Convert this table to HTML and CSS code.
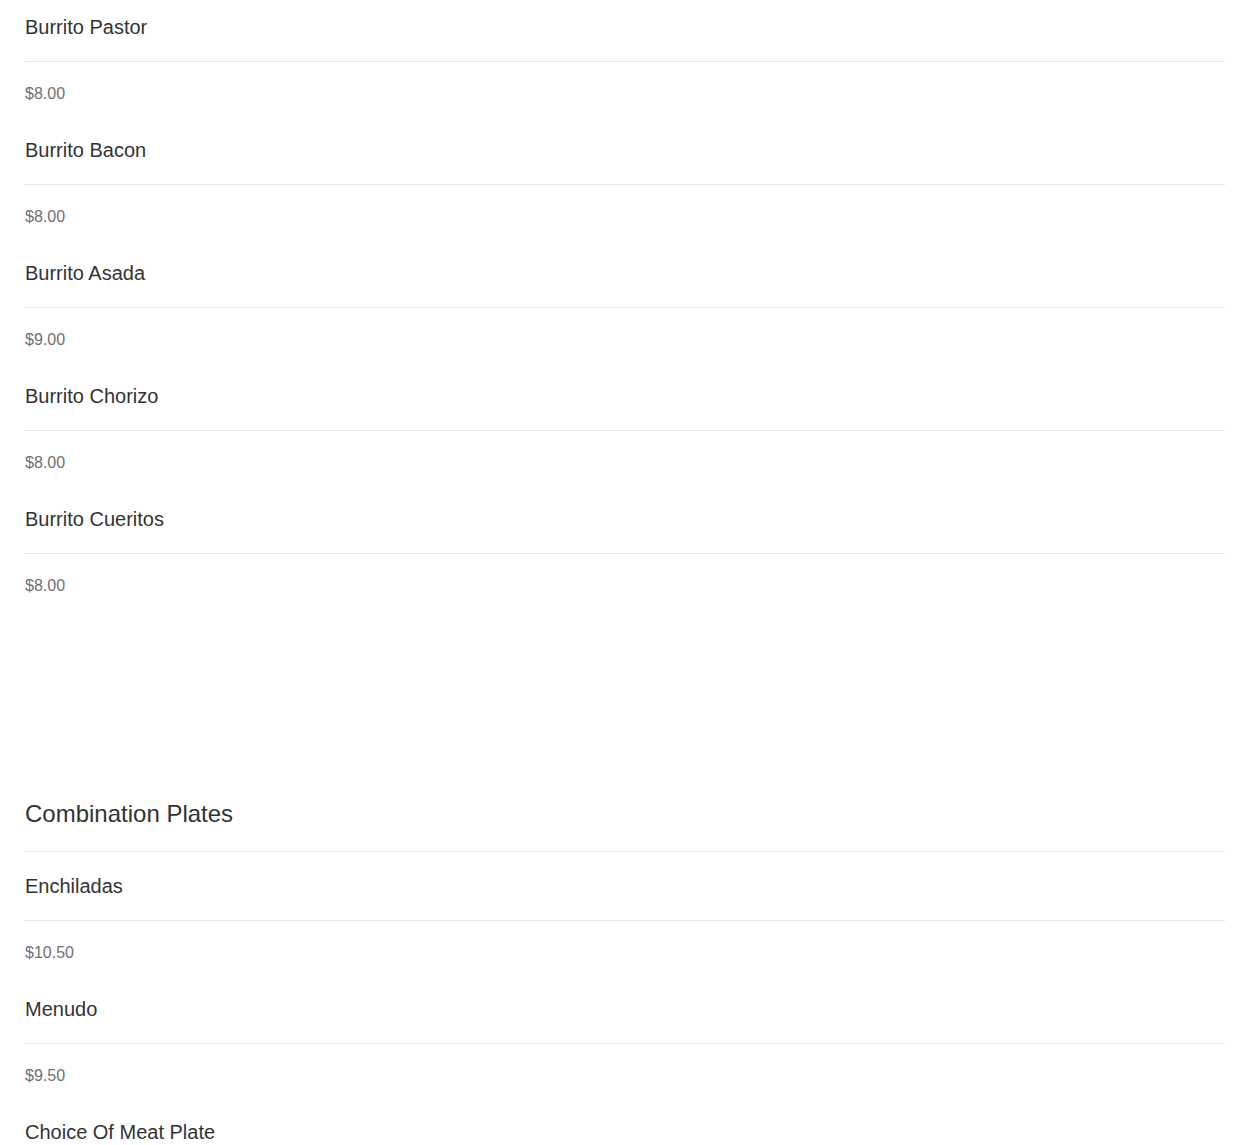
FILE: index.html
```html
<!DOCTYPE html>
<html>
<head>
<meta charset="utf-8">
<link rel="stylesheet" href="styles.css">
</head>
<body>
<div class="menu">
  <section class="section">
    <div class="item"><div class="name">Burrito Pastor</div><div class="price">$8.00</div></div>
    <div class="item"><div class="name">Burrito Bacon</div><div class="price">$8.00</div></div>
    <div class="item"><div class="name">Burrito Asada</div><div class="price">$9.00</div></div>
    <div class="item"><div class="name">Burrito Chorizo</div><div class="price">$8.00</div></div>
    <div class="item"><div class="name">Burrito Cueritos</div><div class="price">$8.00</div></div>
  </section>
  <section class="section section-spaced">
    <h2 class="section-title">Combination Plates</h2>
    <div class="item first"><div class="name">Enchiladas</div><div class="price">$10.50</div></div>
    <div class="item"><div class="name">Menudo</div><div class="price">$9.50</div></div>
    <div class="item"><div class="name">Choice Of Meat Plate</div><div class="price">$9.50</div></div>
  </section>
</div>
</body>
</html>
```
FILE: styles.css
```css
html, body {
  margin: 0;
  padding: 0;
  background: #fff;
}
body {
  font-family: "Liberation Sans", Arial, sans-serif;
  color: #333;
}
.menu {
  padding: 16px 25px 0 25px;
}
.section-spaced {
  margin-top: 205px;
}
.section-title {
  margin: 0;
  font-size: 24px;
  line-height: 26px;
  font-weight: normal;
  color: #333;
  padding-bottom: 24px;
  border-bottom: 1px solid #e6e6e6;
}
.item {
  margin-top: 35px;
}
.section .item:first-child {
  margin-top: 0;
}
.item.first {
  margin-top: 23px;
}
.name {
  font-size: 20px;
  line-height: 22px;
  color: #333;
  padding-bottom: 23px;
  border-bottom: 1px solid #e6e6e6;
}
.price {
  margin-top: 22px;
  font-size: 16px;
  line-height: 20px;
  color: #707070;
}
```
